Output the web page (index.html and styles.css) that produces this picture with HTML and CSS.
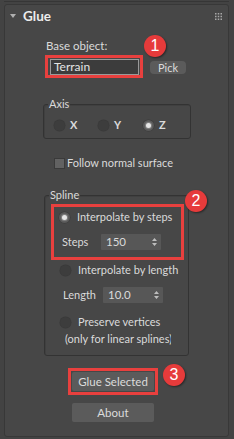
FILE: index.html
```html
<!DOCTYPE html>
<html>
<head>
<meta charset="utf-8">
<link rel="stylesheet" href="styles.css">
</head>
<body>
<div class="prev"></div>
<div class="rollout">
  <div class="header">
    <svg class="tri" width="6" height="4" viewBox="0 0 6 4"><path d="M0 0H6L3 4Z" fill="#b0b0b0"/></svg>
    <span class="title">Glue</span>
    <svg class="grip" width="7" height="7" viewBox="0 0 7 7" fill="#a8a8a8">
      <rect x="0" y="0" width="1.5" height="1.5"/><rect x="2.75" y="0" width="1.5" height="1.5"/><rect x="5.5" y="0" width="1.5" height="1.5"/>
      <rect x="0" y="2.75" width="1.5" height="1.5"/><rect x="2.75" y="2.75" width="1.5" height="1.5"/><rect x="5.5" y="2.75" width="1.5" height="1.5"/>
      <rect x="0" y="5.5" width="1.5" height="1.5"/><rect x="2.75" y="5.5" width="1.5" height="1.5"/><rect x="5.5" y="5.5" width="1.5" height="1.5"/>
    </svg>
  </div>
  <div class="content">
    <div class="label base-label">Base object:</div>
    <div class="pick-row">
      <div class="hl hl-field"><div class="field">Terrain</div></div>
      <div class="btn pick">Pick</div>
    </div>

    <div class="group axis">
      <div class="legend">Axis</div>
      <div class="radios">
        <div class="opt"><span class="radio"></span><span class="opt-text">X</span></div>
        <div class="opt"><span class="radio"></span><span class="opt-text">Y</span></div>
        <div class="opt"><span class="radio on"></span><span class="opt-text">Z</span></div>
      </div>
    </div>

    <div class="check-row"><span class="check"></span><span class="label">Follow normal surface</span></div>

    <div class="group spline">
      <div class="legend">Spline</div>
      <div class="hl hl-steps">
        <div class="radio-row first"><span class="radio on"></span><span class="label">Interpolate by steps</span></div>
        <div class="spin-row steps"><span class="label spin-label">Steps</span><div class="spin"><span>150</span><svg width="5" height="8" viewBox="0 0 5 8" fill="#bdbdbd"><path d="M0 3H5L2.5 0Z M0 5H5L2.5 8Z"/></svg></div></div>
      </div>
      <div class="radio-row second"><span class="radio"></span><span class="label">Interpolate by length</span></div>
      <div class="spin-row length"><span class="label spin-label">Length</span><div class="spin"><span>10.0</span><svg width="5" height="8" viewBox="0 0 5 8" fill="#bdbdbd"><path d="M0 3H5L2.5 0Z M0 5H5L2.5 8Z"/></svg></div></div>
      <div class="radio-row third"><span class="radio"></span><span class="label">Preserve vertices</span></div>
      <div class="label note">(only for linear splines)</div>
    </div>

    <div class="hl hl-glue"><div class="btn wide">Glue Selected</div></div>
    <div class="btn wide about">About</div>
  </div>

  <div class="badge b1">1</div>
  <div class="badge b2">2</div>
  <div class="badge b3">3</div>
</div>
</body>
</html>
```
FILE: styles.css
```css
* { box-sizing: border-box; }
html, body { margin: 0; padding: 0; }
body {
  background: #434343;
  width: 234px;
  height: 439px;
  overflow: hidden;
  font-family: Lato, "Noto Sans", sans-serif;
  font-size: 11px;
  line-height: 14px;
  color: #dadada;
}
.prev {
  height: 2px;
  margin: 0 5px 0 4px;
  border-bottom: 1px solid #363636;
}
.rollout {
  position: relative;
  margin: 2px 0 0 4px;
  width: 225px;
  height: 433px;
  background: #474747;
  border: 1px solid #383838;
  border-radius: 3px;
}
.header {
  display: flex;
  align-items: center;
  height: 22px;
  padding: 0 6px 0 5px;
}
.tri { margin-right: 7px; }
.title {
  font-weight: 700;
  font-size: 13.5px;
  color: #ececec;
}
.grip { margin-left: auto; }
.content {
  display: flex;
  flex-direction: column;
  align-items: flex-start;
  padding-left: 38px;
}
.base-label { margin: 12px 0 0 3px; font-size: 11.5px; }
.pick-row {
  display: flex;
  align-items: center;
  margin: 2px 0 0 2px;
}
.hl { border: 3px solid #e8403e; }
.hl-field {
  width: 98px;
  height: 23px;
  padding: 1px 1px 0 2px;
}
.field {
  width: 89px;
  height: 16px;
  background: #3c3c3c;
  border: 1px solid #9a9a9a;
  font-size: 12px;
  line-height: 14px;
  padding-left: 3px;
  color: #e4e4e4;
}
.btn {
  background: #5b5b5b;
  border-radius: 3px;
  text-align: center;
  color: #dcdcdc;
}
.pick {
  width: 36px;
  height: 13px;
  line-height: 13px;
  margin-left: 7px;
  margin-top: 1px;
  border-radius: 4px;
}
.group {
  border: 1px solid #333333;
  border-radius: 3px;
  box-shadow: inset 1px 1px 0 #404040;
}
.legend {
  margin: -8px 0 0 4px;
  padding: 0 1px;
  background: #474747;
  align-self: flex-start;
}
.axis {
  margin-top: 26px;
  width: 148px;
  height: 35px;
  display: flex;
  flex-direction: column;
}
.radios {
  display: grid;
  grid-template-columns: 44px 45px auto;
  margin: 7px 0 0 10px;
}
.opt { display: flex; align-items: center; }
.radio {
  width: 11px;
  height: 11px;
  border-radius: 50%;
  background: #3d3d3d;
  box-shadow: 0 0 0 0.5px #393939;
  display: flex;
  align-items: center;
  justify-content: center;
  flex: none;
}
.radio.on { background: #5a5a5a; }
.radio.on::after {
  content: "";
  width: 5px;
  height: 5px;
  border-radius: 50%;
  background: #e6e6e6;
  box-shadow: 0 0 1px 1px rgba(220,220,220,0.35);
}
.opt-text { margin-left: 5px; font-weight: 700; font-size: 11px; }
.check-row {
  display: flex;
  align-items: center;
  margin: 17px 0 0 11px;
}
.check {
  width: 11px;
  height: 11px;
  background: #626262;
  border: 1px solid #3a3a3a;
  margin-right: 2px;
}
.spline {
  margin: 25px 0 0 1px;
  width: 145px;
  height: 161px;
  display: flex;
  flex-direction: column;
}
.hl-steps {
  width: 133px;
  height: 56px;
  margin: 2px 0 0 6px;
  padding: 3px 0 0 5px;
}
.radio-row { display: flex; align-items: center; }
.radio-row .radio { margin-right: 7px; }
.spin-row { display: flex; align-items: center; }
.spin-label { width: 39px; }
.spin {
  width: 60px;
  height: 16px;
  background: #575757;
  border-radius: 1px;
  display: flex;
  align-items: center;
  justify-content: space-between;
  padding: 0 4px 0 5px;
  font-size: 11.5px;
}
.steps { margin: 10px 0 0 3px; }
.second { margin: 3px 0 0 15px; }
.length { margin: 10px 0 0 18px; }
.length .spin-label { width: 40px; }
.third { margin: 12px 0 0 15px; }
.note {
  margin: 3px 0 0 20px;
  width: 106px;
  white-space: nowrap;
  overflow: hidden;
}
.hl-glue {
  margin: 12px 0 0 25px;
  width: 90px;
  height: 27px;
  padding: 1px 0 0 1px;
}
.wide {
  width: 82px;
  height: 19px;
  line-height: 19px;
  font-size: 11.5px;
  border-radius: 2px;
}
.about { margin: 8px 0 0 29px; }
.badge {
  position: absolute;
  width: 22px;
  height: 22px;
  border-radius: 50%;
  background: #e63b3b;
  color: #fff;
  font-family: "Liberation Sans", Arial, sans-serif;
  font-size: 16px;
  line-height: 22px;
  text-align: center;
  box-shadow: 1px 1px 2px rgba(0,0,0,0.45);
}
.b1 { left: 139px; top: 30px; }
.b2 { left: 180px; top: 185px; }
.b3 { left: 158px; top: 359px; }
```
